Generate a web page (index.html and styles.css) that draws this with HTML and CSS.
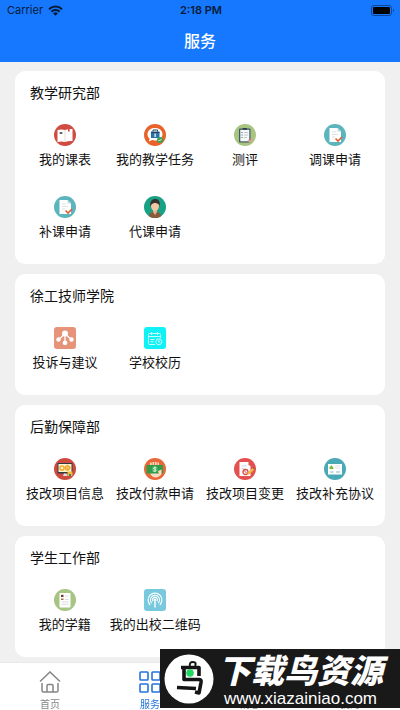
FILE: index.html
```html
<!DOCTYPE html>
<html lang="zh-CN">
<head>
    <meta charset="UTF-8">
    <meta name="viewport" content="width=device-width, initial-scale=1.0">
    <title>服务</title>
    <link rel="stylesheet" href="styles.css">
</head>
<body>
    <header class="header">
        <div class="status-bar">
            <div class="carrier">
                <span>Carrier</span>
                <svg width="15" height="11" viewBox="0 0 15 11" fill="none" stroke="#061a38" stroke-width="2">
                    <path d="M1 4.2a9.3 9.3 0 0 1 13 0M3.4 6.7a5.8 5.8 0 0 1 8.2 0"/>
                    <path d="M7.5 10.8L5.2 8.5a3.2 3.2 0 0 1 4.6 0z" fill="#061a38" stroke="none"/>
                </svg>
            </div>
            <span class="time">2:18 PM</span>
            <div class="battery">
                <svg width="24" height="11" viewBox="0 0 24 11">
                    <rect x=".5" y=".5" width="20" height="10" rx="2.5" fill="none" stroke="#0d4796"/>
                    <rect x="2" y="2" width="17" height="7" rx="1.2" fill="#000"/>
                    <path d="M22 3.5q2 2 0 4z" fill="#0d4796"/>
                </svg>
            </div>
        </div>
        <h1>服务</h1>
    </header>

    <main class="content">
        <section class="card">
            <h2>教学研究部</h2>
            <div class="grid">
                <button class="item">
                    <svg class="icon" viewBox="0 0 22 22">
                        <circle cx="11" cy="11" r="11" fill="#d04c41"/>
                        <path d="M3.500 6q4-1 7.500 0 4-1.500 7.500-1v12q-4-.5-7.500 1-3.500-1-7.500 0z" fill="#fff"/>
                        <path d="M11 6v12" stroke="#e6c9c4" stroke-width=".7"/>
                        <path d="M5 9l2-1 2 1-2 1z" fill="#333"/>
                        <path d="M14 5v3l.8-.8.8.8V5z" fill="#d04c41"/>
                    </svg>
                    <span>我的课表</span>
                </button>
                <button class="item">
                    <svg class="icon" viewBox="0 0 22 22">
                        <circle cx="11" cy="11" r="11" fill="#e8622a"/>
                        <path d="M11 4c4.500 0 7.500 2.600 7.500 6.200S15.500 16.500 11 16.500c-1 0-2-.1-2.800-.4L4.800 17.500l.8-2.800C4.200 13.500 3.500 12 3.500 10.200 3.500 6.600 6.500 4 11 4z" fill="#fff"/>
                        <rect x="7" y="7.500" width="8.500" height="6.500" fill="#2d70a5"/>
                        <path d="M9 7.500V6h4.500v1.500M7 8.500h8.500" stroke="#263f58" fill="none"/>
                        <path d="M10.300 9.500h1.800v3.500h-1.800z" fill="#b9d7eb"/>
                        <circle cx="16" cy="16" r="3" fill="#3aa757"/>
                        <path d="M14.500 16l1 1 2-2" stroke="#fff" stroke-width=".8" fill="none"/>
                    </svg>
                    <span>我的教学任务</span>
                </button>
                <button class="item">
                    <svg class="icon" viewBox="0 0 22 22">
                        <circle cx="11" cy="11" r="11" fill="#a8c47f"/>
                        <rect x="5" y="4.500" width="11.500" height="14" rx="1" fill="#3e5965"/>
                        <rect x="6.300" y="5.800" width="9" height="11.500" fill="#f6f8fa"/>
                        <rect x="8.500" y="4" width="4.500" height="1.800" rx=".8" fill="#2c3e49"/>
                        <path d="M7.300 8.500h1.500M7.300 11h1.500M7.300 13.500h1.500" stroke="#7b8d99"/>
                        <path d="M10 8.500h4M10 11h4M10 13.500h3" stroke="#c0c8cf"/>
                        <path d="M14 16l1.500 1.700 3-3" stroke="#e9a394" stroke-width="1.500" fill="none"/>
                    </svg>
                    <span>测评</span>
                </button>
                <button class="item">
                    <svg class="icon" viewBox="0 0 22 22">
                        <circle cx="11" cy="11" r="11" fill="#5cb5bd"/>
                        <path d="M5.500 4h8l3.500 3.500V18H5.500z" fill="#fff"/>
                        <path d="M13.500 4l3.500 3.500h-3.500z" fill="#c5dadd"/>
                        <path d="M8 8h4M8 10.500h6M8 13h3" stroke="#dcdfe1"/>
                        <path d="M11.500 14.500l2.500 2.500 4-4" stroke="#e05a35" stroke-width="1.600" fill="none"/>
                    </svg>
                    <span>调课申请</span>
                </button>
                <button class="item">
                    <svg class="icon" viewBox="0 0 22 22">
                        <circle cx="11" cy="11" r="11" fill="#5cb5bd"/>
                        <path d="M5.500 4h8l3.500 3.500V18H5.500z" fill="#fff"/>
                        <path d="M13.500 4l3.500 3.500h-3.500z" fill="#c5dadd"/>
                        <path d="M8 8h4M8 10.500h6M8 13h3" stroke="#dcdfe1"/>
                        <path d="M11.500 14.500l2.500 2.500 4-4" stroke="#e05a35" stroke-width="1.600" fill="none"/>
                    </svg>
                    <span>补课申请</span>
                </button>
                <button class="item">
                    <svg class="icon" viewBox="0 0 22 22">
                        <circle cx="11" cy="11" r="11" fill="#19a186"/>
                        <path d="M5 20.200c0-3 2.500-4.200 6-4.700 3.500.5 6 1.700 6 4.700a11 11 0 0 1-12 0z" fill="#8a5a3c"/>
                        <path d="M9 13h4v3l-2 3-2-3z" fill="#e8b48c"/>
                        <ellipse cx="11" cy="10" rx="4" ry="5" fill="#f3c7a2"/>
                        <path d="M6.500 10.500C5.500 5.500 8 3 11.200 3s5.500 2.500 4.300 7.500L14.500 8 11 6.800 7.800 8z" fill="#37302f"/>
                    </svg>
                    <span>代课申请</span>
                </button>
            </div>
        </section>

        <section class="card">
            <h2>徐工技师学院</h2>
            <div class="grid">
                <button class="item">
                    <svg class="icon" viewBox="0 0 22 22">
                        <rect width="22" height="22" rx="3" fill="#e6937a"/>
                        <path d="M11 7L4.500 12.500M11 7v9M11 7l6.500 5.500" stroke="#fff" stroke-width="1.300"/>
                        <g fill="#fff">
                            <circle cx="11" cy="6.500" r="3"/>
                            <circle cx="4.500" cy="12.500" r="2.200"/>
                            <circle cx="17.500" cy="12.500" r="2.200"/>
                            <circle cx="11" cy="15.800" r="2.400"/>
                        </g>
                    </svg>
                    <span>投诉与建议</span>
                </button>
                <button class="item">
                    <svg class="icon" viewBox="0 0 22 22">
                        <rect width="22" height="22" rx="3" fill="#11f2f7"/>
                        <g fill="none" stroke="#c9fcfd" stroke-width="1">
                            <path d="M11 17.500H5.500q-1 0-1-1v-9q0-1 1-1h10q1 0 1 1V11M4.500 9.500h12M7.500 5v3M13.500 5v3M6.500 12.500h4M6.500 14.800h3"/>
                            <circle cx="14.800" cy="14.800" r="3"/>
                            <path d="M14.800 13v2h1.500"/>
                        </g>
                    </svg>
                    <span>学校校历</span>
                </button>
            </div>
        </section>

        <section class="card">
            <h2>后勤保障部</h2>
            <div class="grid">
                <button class="item">
                    <svg class="icon" viewBox="0 0 22 22">
                        <circle cx="11" cy="11" r="11" fill="#cf4a3e"/>
                        <rect x="3.500" y="5" width="15" height="10.500" rx=".8" fill="#303a42"/>
                        <rect x="4.500" y="6" width="13" height="8" fill="#fff3d2"/>
                        <path d="M9 18l1-2.500h2.500l1 2.500z" fill="#dce1e4"/>
                        <circle cx="8" cy="10" r="2.100" fill="none" stroke="#efad2f" stroke-width="1.500"/>
                        <circle cx="13.500" cy="9.800" r="2.100" fill="none" stroke="#efad2f" stroke-width="1.500"/>
                        <path d="M13.500 6.500v6.500M10.300 9.800H17" stroke="#efad2f" stroke-width=".8"/>
                        <path d="M13.500 13.500h5v4.500h-5z" fill="#f6bd32"/>
                        <path d="M15 16h2v2h-2z" fill="#3976a2"/>
                    </svg>
                    <span>技改项目信息</span>
                </button>
                <button class="item">
                    <svg class="icon" viewBox="0 0 22 22">
                        <circle cx="11" cy="11" r="11" fill="#e9683a"/>
                        <path d="M6 8V4.500h1.700V8M8.500 8V4h1.700v4M11 8V4h1.700v4M13.500 8V4.500h1.500V8" fill="#f9dcc0"/>
                        <path d="M6.500 14h10v3q-2 2.500-5 2.500t-5-3z" fill="#f9dcc0"/>
                        <rect x="2.500" y="7" width="16.500" height="8.500" fill="#329b48"/>
                        <circle cx="10.800" cy="11.200" r="3" fill="#50b568"/>
                        <path d="M12.300 9.700q-1.500-1-2.500 0t1 1.600q1.800.7.900 1.600t-2.500 0M11 8.500V14" stroke="#eafbea" stroke-width=".8" fill="none"/>
                        <path d="M14 13l3.500-1.500V16l-2 2z" fill="#f9dcc0"/>
                    </svg>
                    <span>技改付款申请</span>
                </button>
                <button class="item">
                    <svg class="icon" viewBox="0 0 22 22">
                        <circle cx="11" cy="11" r="11" fill="#e44f4f"/>
                        <path d="M5.500 4h9v3l2 1v10h-11z" fill="#fff"/>
                        <path d="M7.500 8h5M7.500 10.500h3" stroke="#ced6de"/>
                        <circle cx="11.500" cy="14" r="2.500" fill="none" stroke="#d94a4a" stroke-width="1.300"/>
                        <path d="M10 12.500l3 3" stroke="#d94a4a"/>
                        <path d="M13 17l.7-2.500 5-4.500 1.600 1.800-5 4.400z" fill="#f1b742"/>
                        <path d="M18.700 10l1-.8 1.500 1.600-.9 1z" fill="#a75a30"/>
                    </svg>
                    <span>技改项目变更</span>
                </button>
                <button class="item">
                    <svg class="icon" viewBox="0 0 22 22">
                        <circle cx="11" cy="11" r="11" fill="#4aa9b7"/>
                        <rect x="4" y="6" width="14" height="10.500" fill="#fff"/>
                        <path d="M5.500 11V9l1-.5.8-1.500 1 1.500 1 .5v2z" fill="#77bd35"/>
                        <path d="M11 8h5.500M11 10h5.500" stroke="#e1e7e9"/>
                        <path d="M6 14h3.500M12 14h4" stroke="#80bdc8"/>
                    </svg>
                    <span>技改补充协议</span>
                </button>
            </div>
        </section>

        <section class="card">
            <h2>学生工作部</h2>
            <div class="grid">
                <button class="item">
                    <svg class="icon" viewBox="0 0 22 22">
                        <circle cx="11" cy="11" r="11" fill="#a6c483"/>
                        <rect x="5.500" y="4" width="11" height="14.500" rx=".8" fill="#fff"/>
                        <path d="M7 5.800h2.500V8H7z" fill="#6e3c38"/>
                        <path d="M7 9.500h2.500V11H7z" fill="#a66b57"/>
                        <path d="M11 7h3.500M11 10.500h3.500M7.500 13h7M7.500 15.300h7" stroke="#ced3d1" stroke-width=".8"/>
                    </svg>
                    <span>我的学籍</span>
                </button>
                <button class="item">
                    <svg class="icon" viewBox="0 0 22 22">
                        <rect width="22" height="22" rx="3" fill="#79c9de"/>
                        <g fill="none" stroke="#fff" stroke-width="1.100">
                            <path d="M6.200 16a6.900 6.900 0 1 1 9.600 0"/>
                            <path d="M7.800 14a4.500 4.500 0 1 1 6.400 0"/>
                            <path d="M9.200 12.200a2.400 2.400 0 1 1 3.600 0"/>
                            <path d="M11 10.500v8" stroke-width="1.400"/>
                        </g>
                        <circle cx="11" cy="10.500" r="1.100" fill="#fff"/>
                    </svg>
                    <span>我的出校二维码</span>
                </button>
            </div>
        </section>
    </main>

    <nav class="tab-bar">
        <a class="tab" href="#">
            <svg viewBox="0 0 22 22" fill="none" stroke="#858585" stroke-width="1.500">
                <path d="M1 10.500L11 1l10 9.500M3 12v7.500q0 1.500 1.500 1.500h13q1.500 0 1.500-1.500V12M8 21v-6.500q0-1 1-1h4q1 0 1 1V21"/>
            </svg>
            <span>首页</span>
        </a>
        <a class="tab active" href="#">
            <svg viewBox="0 0 22 22" fill="none" stroke="#2473dc" stroke-width="1.600">
                <rect x="1" y="1" width="8" height="8" rx=".8"/>
                <rect x="13" y="1" width="8" height="8" rx=".8"/>
                <rect x="1" y="13" width="8" height="8" rx=".8"/>
                <rect x="13" y="13" width="8" height="8" rx=".8"/>
            </svg>
            <span>服务</span>
        </a>
        <a class="tab" href="#">
            <svg viewBox="0 0 22 22" fill="none" stroke="#858585" stroke-width="1.500">
                <path d="M2 3h18v13H9l-4 4v-4H2z"/>
            </svg>
            <span>消息</span>
        </a>
        <a class="tab" href="#">
            <svg viewBox="0 0 22 22" fill="none" stroke="#858585" stroke-width="1.500">
                <circle cx="11" cy="6" r="5"/>
                <path d="M2 21q0-8 9-8t9 8z"/>
            </svg>
            <span>我的</span>
        </a>
    </nav>

    <div class="banner">
        <svg width="50" height="50" viewBox="0 0 50 50">
            <circle cx="25" cy="25" r="24.500" fill="#fff"/>
            <g fill="none" stroke="#151515" stroke-width="3.600" stroke-linejoin="round">
                <path d="M17 13.500h18v8.500M20 13v12.500h15.500q2 0 1.500 3l-2 10.500-4-1"/>
                <path d="M13 33.500l19 1"/>
                <path d="M26 12q-1-4 3-4t2 4" stroke-width="2"/>
            </g>
            <circle cx="26" cy="19" r="3.800" fill="#20d760"/>
        </svg>
        <div class="banner-text">
            <strong>下载鸟资源</strong>
            <span>www.xiazainiao.com</span>
        </div>
    </div>
</body>
</html>
```

FILE: styles.css
```css
* {
    box-sizing: border-box;
}

body {
    margin: 0;
    font-family: "Liberation Sans", "Noto Sans CJK SC", sans-serif;
    background-color: #f0f0f0;
    color: #111;
}

.header {
    background: #1678ff;
}

.status-bar {
    display: grid;
    grid-template-columns: 1fr auto 1fr;
    align-items: center;
    height: 20px;
    padding: 0 5px 0 7px;
    font-family: Inter, sans-serif;
    font-size: 11px;
    color: #061a38;
}

.carrier {
    display: flex;
    align-items: center;
    gap: 5px;
}

.time {
    font-weight: 600;
}

.battery {
    display: flex;
    justify-content: flex-end;
}

.header h1 {
    margin: 0;
    padding-top: 2px;
    font-size: 16px;
    font-weight: 500;
    line-height: 40px;
    text-align: center;
    color: white;
}

.content {
    display: flex;
    flex-direction: column;
    gap: 10px;
    padding: 9px 15px 52px;
}

.card {
    padding: 12px 5px 7px;
    background: white;
    border-radius: 10px;
}

.card h2 {
    margin: 0 10px 10px;
    font-size: 14px;
    font-weight: normal;
    line-height: 20px;
}

.grid {
    display: grid;
    grid-template-columns: repeat(4, 1fr);
}

.item {
    display: flex;
    flex-direction: column;
    align-items: center;
    gap: 4px;
    height: 72px;
    padding: 11px 0 0;
    border: none;
    background: none;
    font-family: inherit;
    font-size: 13px;
    line-height: 20px;
    color: #111;
    white-space: nowrap;
    cursor: pointer;
}

.icon {
    width: 22px;
    height: 22px;
}

.tab-bar {
    position: fixed;
    left: 0;
    right: 0;
    bottom: 0;
    display: flex;
    height: 48px;
    border-top: 1px solid #e8e8e8;
    background: white;
}

.tab {
    flex: 1;
    display: flex;
    flex-direction: column;
    align-items: center;
    gap: 6px;
    padding-top: 8px;
    font-size: 10px;
    line-height: 12px;
    text-decoration: none;
    color: #858585;
}

.tab svg {
    flex-shrink: 0;
    width: 22px;
    height: 22px;
}

.tab.active {
    color: #2473dc;
}

.banner {
    position: fixed;
    right: 0;
    bottom: 2px;
    display: flex;
    align-items: center;
    gap: 4px;
    width: 240px;
    height: 59px;
    padding-left: 4px;
    background: #191919;
    color: white;
}

.banner-text {
    display: flex;
    flex-direction: column;
    align-items: center;
    padding-top: 4px;
}

.banner-text strong {
    font-size: 33px;
    font-weight: 900;
    font-style: italic;
    line-height: 36px;
}

.banner-text span {
    font-size: 17px;
    line-height: 17px;
}
```
